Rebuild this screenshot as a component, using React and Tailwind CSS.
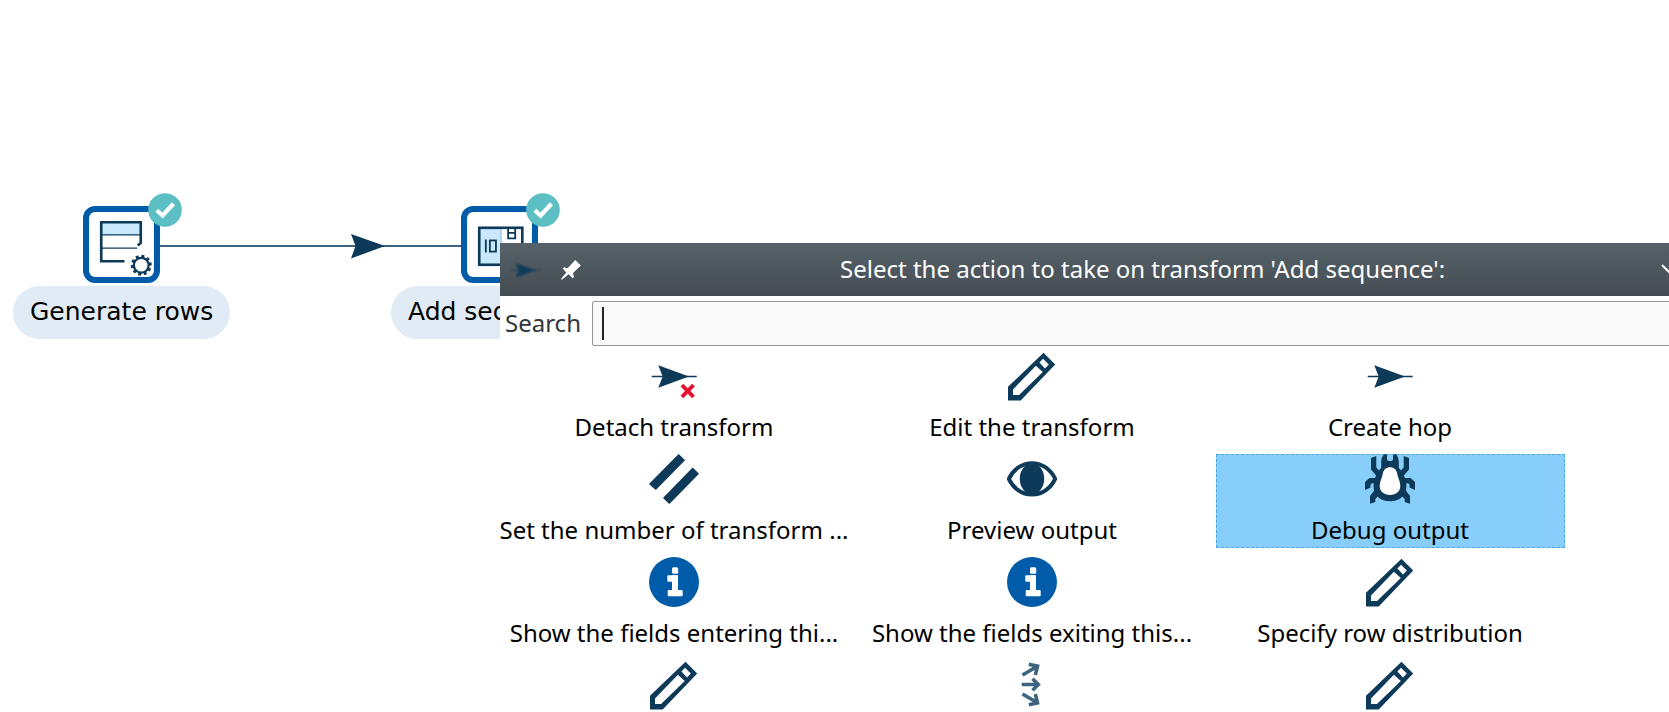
import React from "react";

function PencilIcon() {
  return (
    <svg viewBox="0 0 50 50" className="size-[50px]" aria-hidden="true">
      <path
        fill="#0e3a5a"
        fillRule="evenodd"
        d="M1 49.5V35.8L36.5 1.800L48.200 13.500L13.700 49.500ZM28.900 14.800L6 38.400V44H12L35.800 21ZM36 7.800L32.400 11.600L38 17.400L41.800 13.400Z"
      />
    </svg>
  );
}

function HopIcon({ className = "size-[50px]" }) {
  return (
    <svg viewBox="0 0 50 50" className={className} aria-hidden="true">
      <path stroke="#0e3a5a" strokeWidth="1.5" d="M2.7 25.5H47.7" />
      <path fill="#0e3a5a" d="M9.3 14.3L40 25.5L9.3 36.7L13.7 25.5Z" />
    </svg>
  );
}

function DetachIcon() {
  return (
    <svg viewBox="0 0 50 50" className="size-[50px]" aria-hidden="true">
      <path stroke="#0e3a5a" strokeWidth="1.5" d="M2.7 25.5H47.7" />
      <path fill="#0e3a5a" d="M9.3 14.3L40 25.5L9.3 36.7L13.7 25.5Z" />
      <path stroke="#e8112d" strokeWidth="3.8" d="M32.900 34.2L44.5 45.8M44.5 34.2L32.900 45.8" />
    </svg>
  );
}

function CopiesIcon() {
  return (
    <svg viewBox="0 0 50 50" className="size-[50px]" aria-hidden="true">
      <g fill="#0e3a5a" stroke="#0e3a5a" strokeWidth="1.6" strokeLinejoin="round">
        <path d="M29.7 1L35 6.2L6.7 35L1 30Z" />
        <path d="M43.7 14.6L49 19.8L20.3 49L15 44Z" />
      </g>
    </svg>
  );
}

function EyeIcon() {
  return (
    <svg viewBox="0 0 50 50" className="size-[50px]" aria-hidden="true">
      <path
        fill="none"
        stroke="#0e3a5a"
        strokeWidth="4"
        strokeLinejoin="round"
        d="M1.8 24.8C6 16 14.5 9.2 25 9.2S44 16 48.2 24.8C44 33.8 35.5 40.6 25 40.6S6 33.8 1.8 24.8Z"
      />
      <ellipse cx="25" cy="24.8" rx="12.2" ry="15.5" fill="#0e3a5a" />
    </svg>
  );
}

function BugIcon() {
  return (
    <svg viewBox="0 0 50 50" className="size-[50px]" aria-hidden="true">
      <path
        fill="#0e3a5a"
        d="M19 0H22V5C22 6.5 23 7 25 7S28 6.5 28 5V0H31C33 2.5 33.8 5 33.8 9V14C37.5 17.5 41.5 25 41.5 32C41.5 41.5 34.5 47.2 25 47.2S8.500 41.5 8.500 32C8.500 25 12.5 17.5 16.2 14V9C16.2 5 17 2.5 19 0Z"
      />
      <g fill="#0e3a5a">
        <path d="M6 4L11.3 2V13.5L15.5 18L12.3 23L6 15.5Z" />
        <path d="M44 4L38.7 2V13.5L34.5 18L37.7 23L44 15.5Z" />
        <path d="M0 36V28L4.5 24H13V29.3H7L5.5 30.5V33.5Z" />
        <path d="M50 36V28L45.5 24H37V29.3H43L44.5 30.5V33.5Z" />
        <path d="M5 49.8V42L9.5 36L14 41L10.3 45V48Z" />
        <path d="M45 49.8V42L40.5 36L36 41L39.7 45V48Z" />
      </g>
      <path
        fill="#fff"
        d="M25 13.3C29 13.3 31.3 15.5 32.3 20C33.3 24.5 35.3 28 35.3 32C35.3 37.5 31 41 25 41S14.7 37.5 14.7 32C14.7 28 16.7 24.5 17.7 20C18.7 15.5 21 13.3 25 13.3Z"
      />
    </svg>
  );
}

function InfoIcon() {
  return (
    <svg viewBox="0 0 50 50" className="size-[50px]" aria-hidden="true">
      <circle cx="25" cy="25" r="25" fill="#005ca9" />
      <g fill="#fff">
        <rect x="23" y="10.3" width="6.2" height="6.5" rx="1.5" />
        <rect x="18.3" y="18.3" width="10.7" height="6.4" rx="1" />
        <rect x="23" y="18.3" width="6" height="18" rx="1" />
        <rect x="18.7" y="33" width="15" height="6.3" rx="1" />
      </g>
    </svg>
  );
}

function DistributeIcon() {
  return (
    <svg viewBox="0 0 50 50" className="size-[50px]" aria-hidden="true">
      <g fill="none" stroke="#3d6480" strokeWidth="3.6">
        <path d="M15.5 15L30 6.5M21.8 4.3L30.5 6.2L28.3 15" />
        <path d="M14.7 24.5H31.5M25.5 18.7L31.3 24.5L25.5 30.3" />
        <path d="M15.5 34L30 42.5M21.8 44.7L30.5 42.8L28.3 34" />
      </g>
    </svg>
  );
}

function PinIcon() {
  return (
    <svg viewBox="0 0 20 20" className="size-5" aria-hidden="true">
      <path
        fill="#fff"
        d="M14.3 0L19.8 5.4L13 12L12 13.5L13 17L11.8 18.2L7.5 14.3L1 19.8L0 19L5.2 12.5L1.8 8.5L3 7.2L6.3 8.3L7.8 7Z"
      />
    </svg>
  );
}

function WindowIcon({ d }) {
  return (
    <svg viewBox="0 0 22 22" className="size-[22px]" aria-hidden="true">
      <path fill="none" stroke="#fff" strokeWidth="2" d={d} />
    </svg>
  );
}

function NodeFrame({ children }) {
  return (
    <svg viewBox="0 0 76 76" className="size-[77px]" aria-hidden="true">
      <rect x="3" y="3" width="70" height="70" rx="9" fill="#fff" stroke="#005ca9" strokeWidth="6" />
      {children}
    </svg>
  );
}

const TEETH = [0, 36, 72, 108, 144, 180, 216, 252, 288, 324];

function RowsDrawing() {
  return (
    <g fill="none" stroke="#0e3a5a">
      <rect x="18" y="16" width="39" height="12.5" fill="#c9e8fb" stroke="none" />
      <path strokeWidth="1.2" d="M18 28.5H57M18 41.5H53.5" />
      <path strokeWidth="2.6" d="M41 54.5H18V16H57V36.5L54 39" />
      <circle cx="57.500" cy="58.5" r="7.3" strokeWidth="2.2" />
      {TEETH.map((a) => (
        <rect
          key={a}
          x="56"
          y="48.2"
          width="3"
          height="3"
          fill="#0e3a5a"
          stroke="none"
          transform={`rotate(${a + 10} 57.5 58.5)`}
        />
      ))}
    </g>
  );
}

function SequenceDrawing() {
  return (
    <g fill="none" stroke="#0e3a5a">
      <rect x="18" y="21.5" width="21.5" height="36.5" fill="#c9e8fb" stroke="none" />
      <path strokeWidth="1" stroke="#8fb2c8" d="M39.5 22V58" />
      <rect x="18" y="21.5" width="42.5" height="36.5" strokeWidth="2.6" />
      <path strokeWidth="1.8" d="M24.5 33V46M46.5 22V32H53.5V22M46.5 26.5H53.5" />
      <rect x="28.5" y="34" width="6" height="11" strokeWidth="1.8" />
    </g>
  );
}

function TransformNode({ label, className, children }) {
  return (
    <div className={`absolute flex flex-col items-center gap-[3px] ${className}`}>
      <div className="relative">
        <NodeFrame>{children}</NodeFrame>
        <svg viewBox="0 0 34 34" className="absolute -top-[13px] -right-[22px] size-[34px]" aria-hidden="true">
          <circle cx="17" cy="17" r="16.8" fill="#5cbfc4" />
          <path fill="none" stroke="#fff" strokeWidth="4.2" d="M8.8 17.3L14.6 22.5L25.5 10.8" />
        </svg>
      </div>
      <div className="h-[53px] min-w-[217px] rounded-full bg-[#e1ebf5] px-[17px] font-['DejaVu_Sans',sans-serif] text-[25px] leading-[52px] whitespace-nowrap text-black">
        {label}
      </div>
    </div>
  );
}

const ACTIONS = [
  { label: "Detach transform", Icon: DetachIcon },
  { label: "Edit the transform", Icon: PencilIcon },
  { label: "Create hop", Icon: HopIcon },
  { label: "Set the number of transform ...", Icon: CopiesIcon },
  { label: "Preview output", Icon: EyeIcon },
  { label: "Debug output", Icon: BugIcon, selected: true },
  { label: "Show the fields entering thi...", Icon: InfoIcon },
  { label: "Show the fields exiting this...", Icon: InfoIcon },
  { label: "Specify row distribution", Icon: PencilIcon },
  { name: "Edit", Icon: PencilIcon },
  { name: "Distribute rows", Icon: DistributeIcon },
  { name: "Edit description", Icon: PencilIcon },
];

function ActionButton({ label, name, Icon, selected }) {
  return (
    <button
      type="button"
      aria-label={name}
      className={`flex h-[94px] flex-col items-center gap-[10px] pr-px text-2xl leading-8 whitespace-nowrap text-black ${
        selected ? "bg-[#87cefa] outline outline-dashed -outline-offset-1 outline-[#4aa9e0]" : ""
      }`}
    >
      <Icon />
      {label && <span>{label}</span>}
    </button>
  );
}

function ActionDialog() {
  return (
    <section
      aria-labelledby="dialog-title"
      className="absolute top-[243px] left-[500px] w-[77%] bg-white font-['Noto_Sans',sans-serif] text-2xl leading-8"
    >
      <header className="grid h-[53px] grid-cols-[1fr_auto_1fr] items-center bg-linear-to-b from-[#566168] to-[#454d54] text-white">
        <div className="flex items-center gap-[19px] pl-[10px]">
          <HopIcon className="size-8 blur-[1px]" />
          <button type="button" aria-label="Pin">
            <PinIcon />
          </button>
        </div>
        <h1 id="dialog-title" className="pb-[2px] whitespace-nowrap">
          Select the action to take on transform 'Add sequence':
        </h1>
        <div className="flex justify-end gap-5 pr-[18px]">
          <button type="button" aria-label="Minimize">
            <WindowIcon d="M1 6L11 16L21 6" />
          </button>
          <button type="button" aria-label="Maximize">
            <WindowIcon d="M1 16L11 6L21 16" />
          </button>
          <button type="button" aria-label="Close">
            <WindowIcon d="M3 3L19 19M19 3L3 19" />
          </button>
        </div>
      </header>
      <div className="flex items-center gap-[11px] py-[5px] pl-[5px]">
        <label htmlFor="search" className="pb-[2px] text-[#31363b]">
          Search
        </label>
        <div className="relative grow">
          <input
            id="search"
            type="text"
            className="block h-[45px] w-full rounded-xs border border-[#949699] bg-[#f9f9f9] px-2 outline-none"
          />
          <span className="absolute top-[6px] left-[10px] h-[33px] w-[2px] bg-[#232629]" />
        </div>
      </div>
      <div className="grid grid-cols-[repeat(3,349px)] gap-[9px]">
        {ACTIONS.map((action, i) => (
          <ActionButton key={i} {...action} />
        ))}
      </div>
    </section>
  );
}

export default function App() {
  return (
    <main className="relative h-screen overflow-hidden bg-white">
      <svg className="absolute top-[233px] left-[159px] h-[26px] w-[302px]" aria-hidden="true">
        <path stroke="#3d6480" strokeWidth="2" d="M0 13H302" />
        <path fill="#0e3a5a" d="M192 1L226 13L192 25.5L196.5 13Z" />
      </svg>
      <TransformNode label="Generate rows" className="top-[206px] left-[13px]">
        <RowsDrawing />
      </TransformNode>
      <TransformNode label="Add sequence" className="top-[206px] left-[391px]">
        <SequenceDrawing />
      </TransformNode>
      <ActionDialog />
    </main>
  );
}
